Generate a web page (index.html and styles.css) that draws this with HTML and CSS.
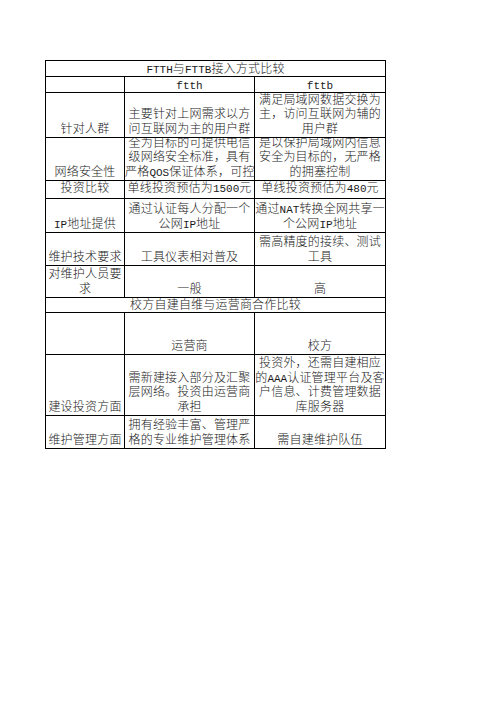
FILE: index.html
```html
<!DOCTYPE html>
<html>
<head>
<meta charset="utf-8">
<link rel="stylesheet" href="styles.css">
</head>
<body>
<div class="sheet">
  <div class="cell span h1"><div class="in"><span class="lat">FTTH</span>与<span class="lat">FTTB</span>接入方式比较</div></div>

  <div class="cell h1"><div class="in"></div></div>
  <div class="cell h1"><div class="in"><span class="lat">ftth</span></div></div>
  <div class="cell h1"><div class="in"><span class="lat">fttb</span></div></div>

  <div class="cell h3"><div class="in">针对人群</div></div>
  <div class="cell h3"><div class="in">主要针对上网需求以方<br>问互联网为主的用户群</div></div>
  <div class="cell h3"><div class="in">满足局域网数据交换为<br>主，访问互联网为辅的<br>用户群</div></div>

  <div class="cell h4"><div class="in">网络安全性</div></div>
  <div class="cell h4"><div class="in">全为目标的可提供电信<br>级网络安全标准，具有<br>严格<span class="lat">QOS</span>保证体系，可控</div></div>
  <div class="cell h4"><div class="in">是以保护局域网内信息<br>安全为目标的，无严格<br>的拥塞控制</div></div>

  <div class="cell h5"><div class="in">投资比较</div></div>
  <div class="cell h5"><div class="in">单线投资预估为<span class="lat">1500</span>元</div></div>
  <div class="cell h5"><div class="in">单线投资预估为<span class="lat">480</span>元</div></div>

  <div class="cell h6"><div class="in"><span class="lat">IP</span>地址提供</div></div>
  <div class="cell h6"><div class="in">通过认证每人分配一个<br>公网<span class="lat">IP</span>地址</div></div>
  <div class="cell h6"><div class="in">通过<span class="lat">NAT</span>转换全网共享一<br>个公网<span class="lat">IP</span>地址</div></div>

  <div class="cell h7"><div class="in">维护技术要求</div></div>
  <div class="cell h7"><div class="in">工具仪表相对普及</div></div>
  <div class="cell h7"><div class="in">需高精度的接续、测试<br>工具</div></div>

  <div class="cell h8"><div class="in">对维护人员要<br>求</div></div>
  <div class="cell h8"><div class="in">一般</div></div>
  <div class="cell h8"><div class="in">高</div></div>

  <div class="cell span h9"><div class="in">校方自建自维与运营商合作比较</div></div>

  <div class="cell h10"><div class="in"></div></div>
  <div class="cell h10"><div class="in">运营商</div></div>
  <div class="cell h10"><div class="in">校方</div></div>

  <div class="cell h11"><div class="in">建设投资方面</div></div>
  <div class="cell h11"><div class="in">需新建接入部分及汇聚<br>层网络。投资由运营商<br>承担</div></div>
  <div class="cell h11"><div class="in">除接入层和汇聚层部分<br>投资外，还需自建相应<br>的<span class="lat">AAA</span>认证管理平台及客<br>户信息、计费管理数据<br>库服务器</div></div>

  <div class="cell h12"><div class="in">维护管理方面</div></div>
  <div class="cell h12"><div class="in">拥有经验丰富、管理严<br>格的专业维护管理体系</div></div>
  <div class="cell h12"><div class="in">需自建维护队伍</div></div>
</div>
</body>
</html>
```

FILE: styles.css
```css
html, body {
  margin: 0;
  padding: 0;
  background: #ffffff;
}

body {
  width: 496px;
  height: 702px;
  overflow: hidden;
}

.sheet {
  margin: 60px 0 0 45px;
  width: 339px;
  padding: 1px;
  background: #000;
  display: grid;
  grid-template-columns: 78px 129px 130px;
  gap: 1px;
  font-family: "Liberation Mono", "Noto Sans CJK SC", monospace;
  font-size: 12px;
  font-weight: 300;
  letter-spacing: 0.2px;
  color: #1a1a1a;
}

.lat {
  font-size: 11px;
  letter-spacing: 0;
  line-height: 1;
}

.cell {
  background: #fff;
  overflow: hidden;
  display: flex;
  flex-direction: column;
  justify-content: flex-end;
}

.in {
  line-height: 14.5px;
  text-align: center;
  white-space: nowrap;
  flex: none;
}

.span {
  grid-column: 1 / -1;
}

.h1 { height: 15px; }
.h3 { height: 44px; }
.h4 { height: 42px; }
.h5 { height: 17px; }
.h6 { height: 33px; }
.h7 { height: 32px; }
.h8 { height: 31px; }
.h9 { height: 14px; }
.h10 { height: 41px; }
.h11 { height: 60px; }
.h12 { height: 32px; }

.h1 .in { line-height: 12px; }
.h9 .in { line-height: 12px; }
.h5 .in { line-height: 17px; }
```
